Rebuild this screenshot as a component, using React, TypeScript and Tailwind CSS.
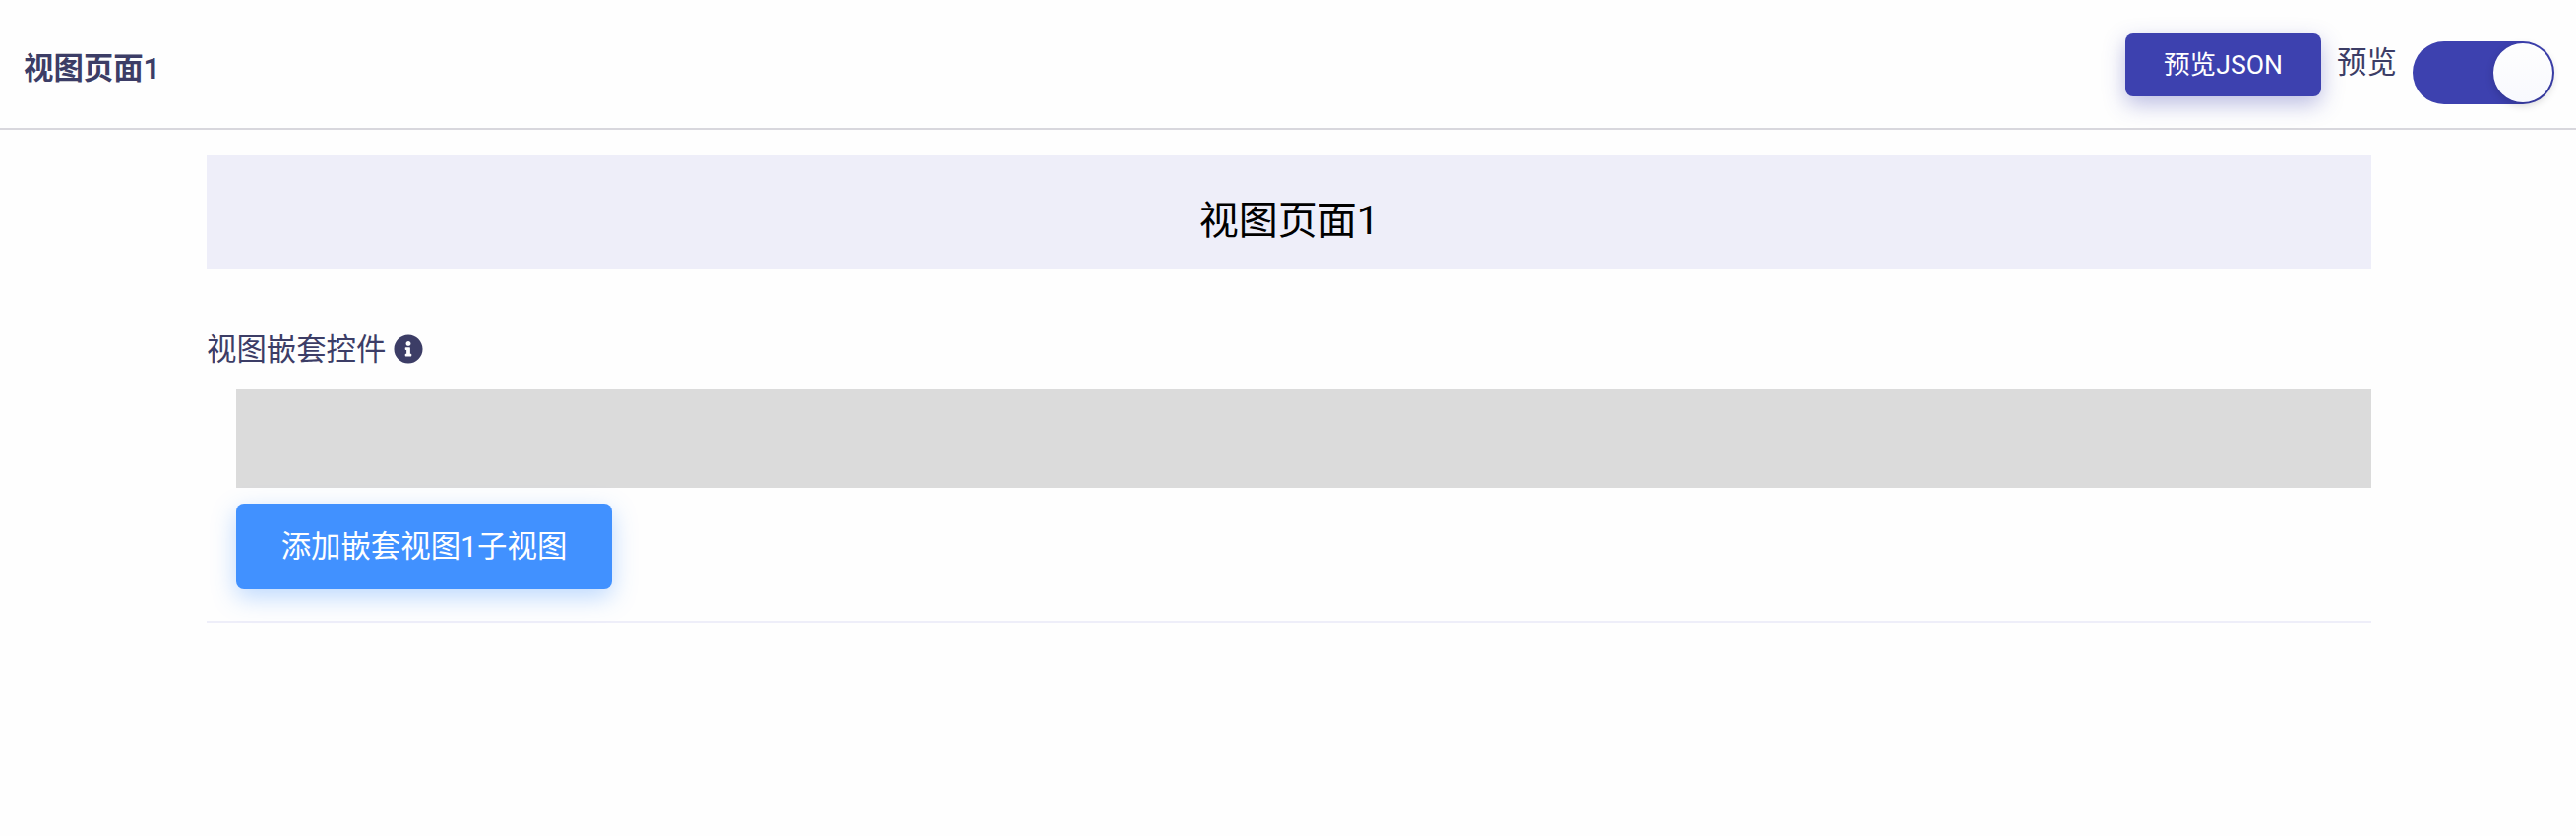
import { FaInfoCircle } from "react-icons/fa";

function Header() {
  return (
    <header className="flex h-[132px] items-start justify-between border-b-2 border-[#d8d7dd] pr-[22px] pl-6">
      <h1 className="mt-[47px] text-[30.4px] leading-[46px] font-bold">视图页面1</h1>
      <div className="flex items-start">
        <button className="mt-[34px] h-16 w-[199px] rounded-lg bg-[#3d41af] text-[26.6px] leading-[62px] whitespace-nowrap text-white shadow-[0_8px_22px_rgba(61,65,175,0.35)]">
          预览JSON
        </button>
        <span className="mt-[41px] ml-4 w-[61px] text-[30.4px] leading-[46px] whitespace-nowrap">
          预览
        </span>
        <button
          role="switch"
          aria-checked="true"
          aria-label="预览"
          className="mt-[42px] ml-4 flex h-16 w-36 items-center justify-end rounded-full bg-[#3d41af] p-0.5"
        >
          <span className="size-[60px] rounded-full bg-linear-to-b from-[#fefefe] to-[#f8f9fe] shadow-[0_3px_8px_rgba(0,0,0,0.18)]" />
        </button>
      </div>
    </header>
  );
}

export default function App() {
  return (
    <div className="min-h-[850px] bg-[#fefefe] font-['Roboto','Noto_Sans_CJK_SC',sans-serif] text-[#3c3d66]">
      <Header />
      <main className="ml-[210px] w-[2200px] pt-[26px]">
        <h2 className="flex h-[116px] items-center justify-center bg-[#eeeef9] pt-[18px] text-[40px] leading-[60px] text-black">
          视图页面1
        </h2>
        <section className="flex flex-col border-b-2 border-[#eeeef9] pt-[59px] pb-8">
          <div className="flex h-[46px] items-center gap-2 text-[30.4px] leading-[46px]">
            <span>视图嵌套控件</span>
            <FaInfoCircle className="-mt-0.5 size-[30px]" />
          </div>
          <div className="mt-[17px] ml-[30px] h-[100px] bg-[#dbdbdb]" />
          <button className="mt-4 ml-[30px] h-[87px] w-[382px] rounded-lg bg-[#4191ff] text-[30.4px] leading-[86px] whitespace-nowrap text-white shadow-[0_8px_24px_rgba(65,145,255,0.35)]">
            添加嵌套视图1子视图
          </button>
        </section>
      </main>
    </div>
  );
}
